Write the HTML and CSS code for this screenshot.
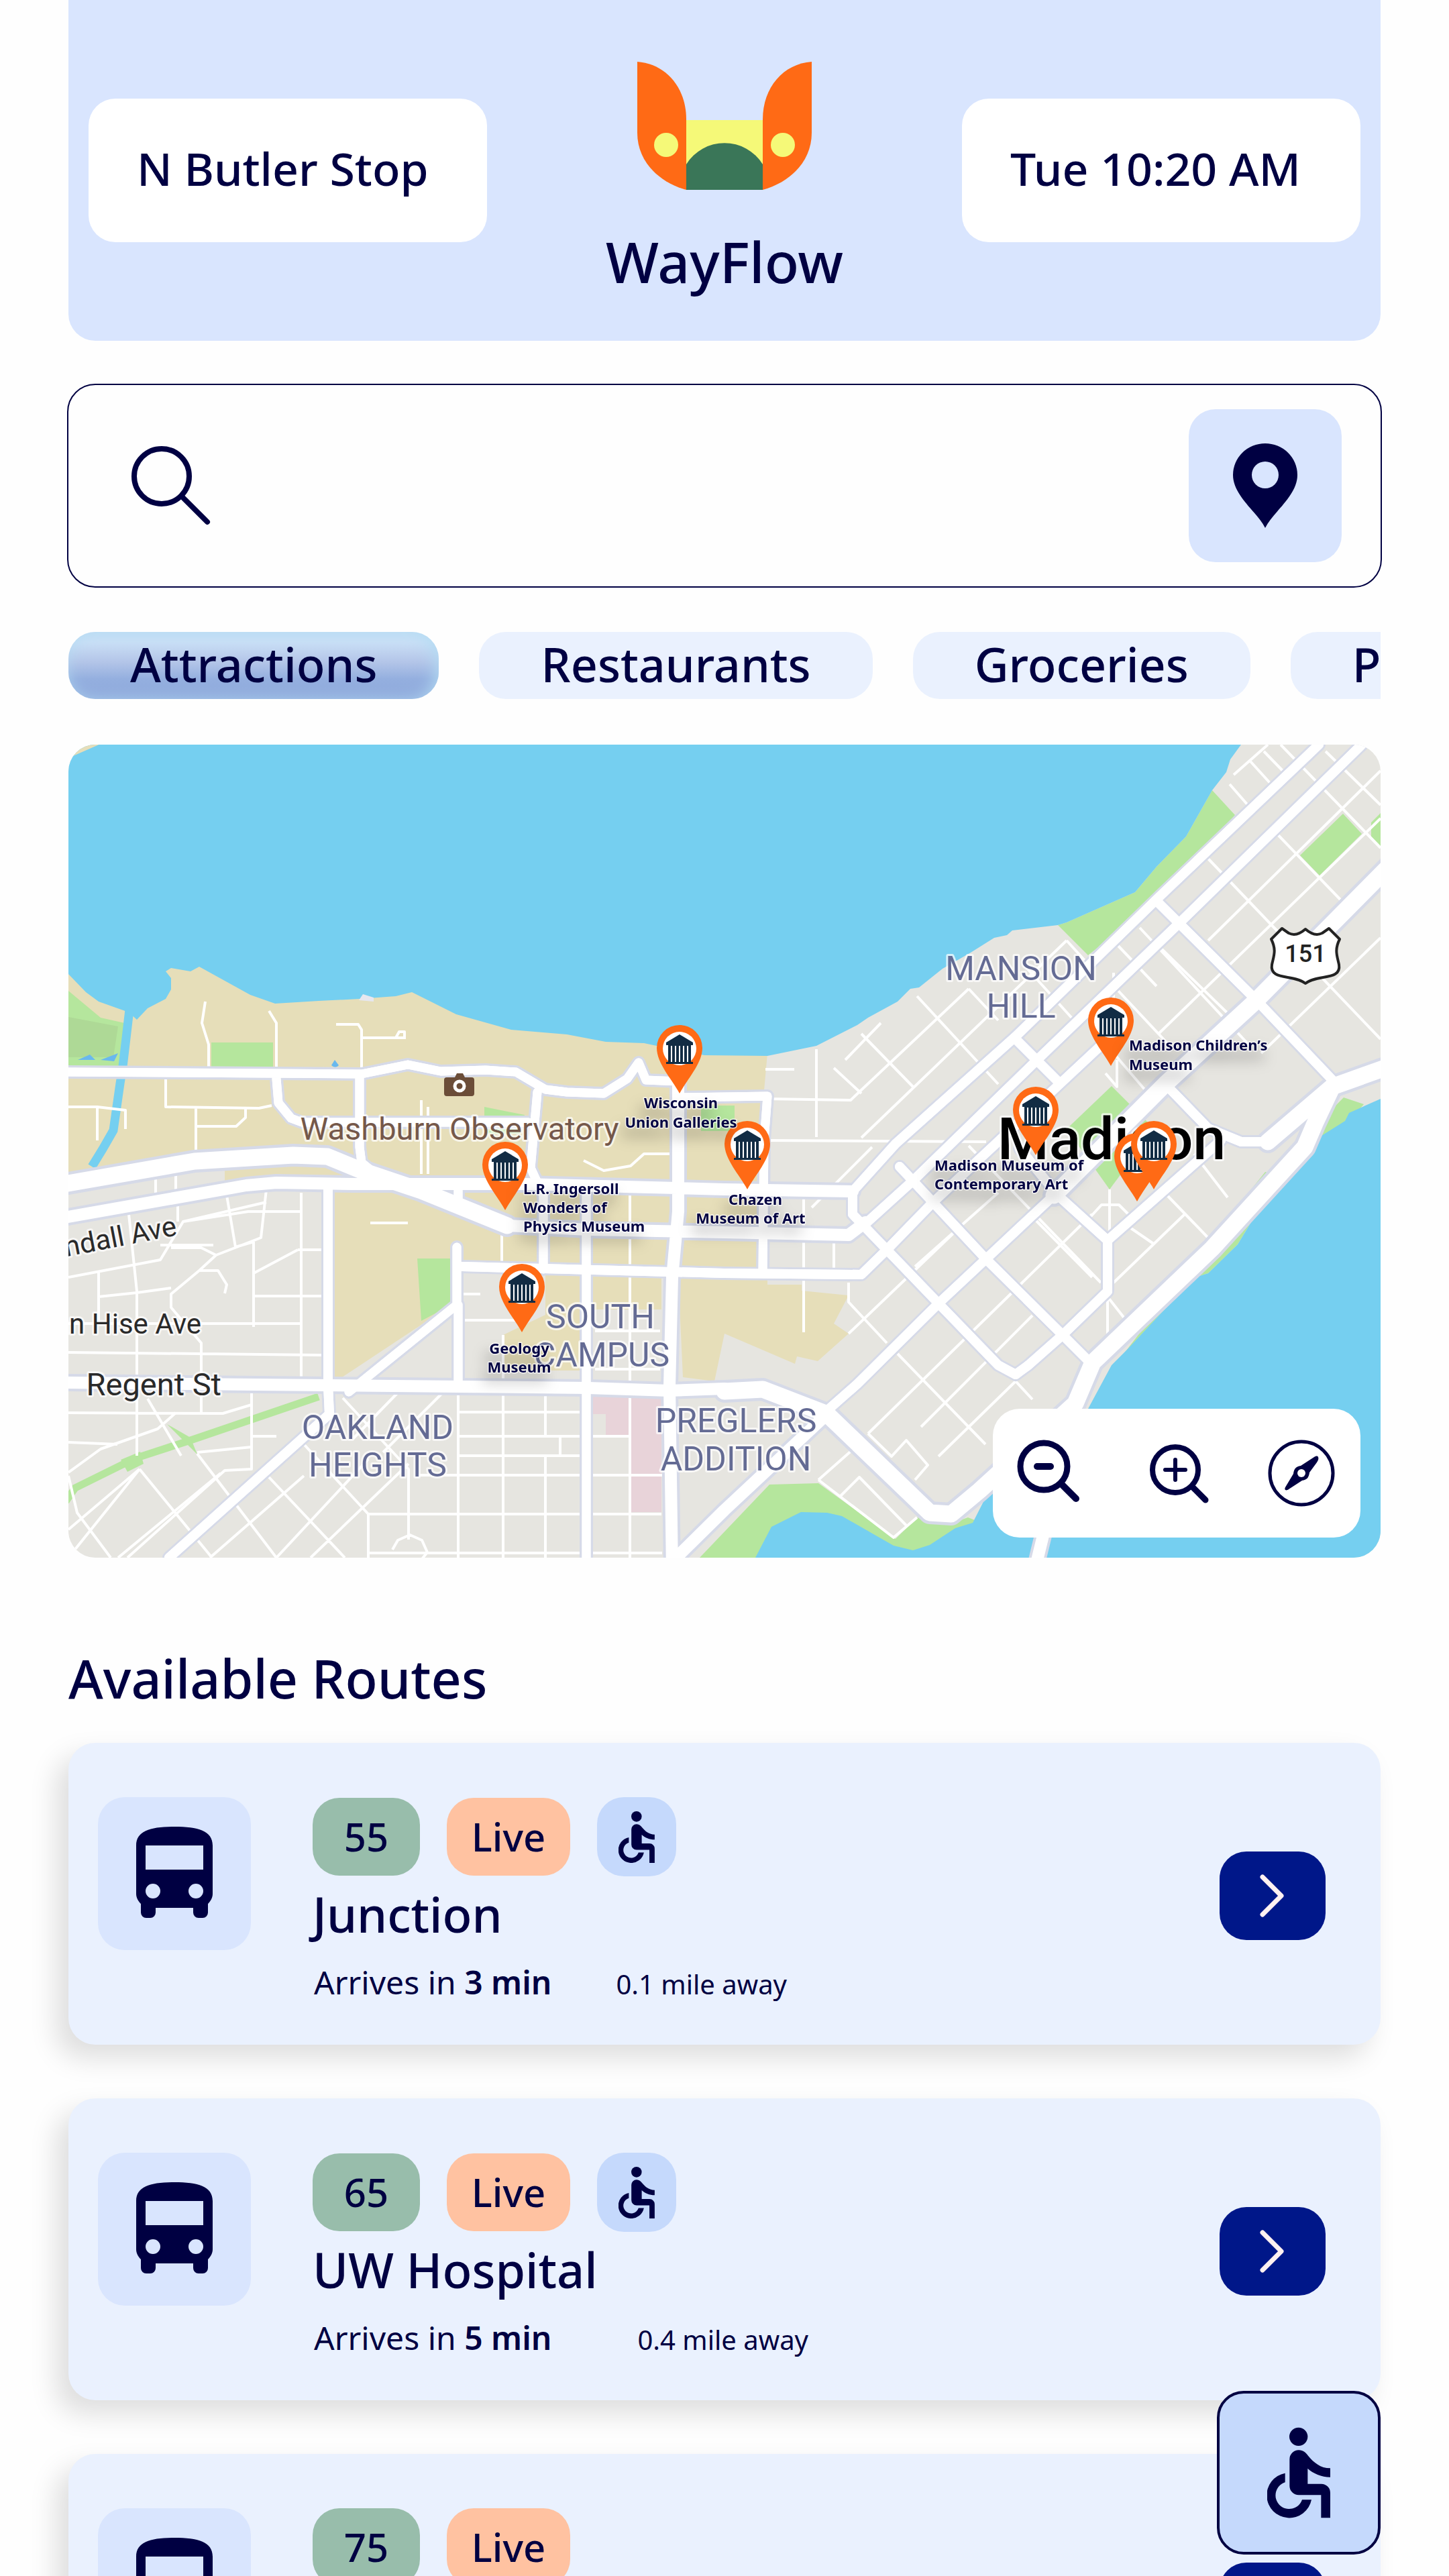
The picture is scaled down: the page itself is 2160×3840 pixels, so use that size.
FILE: index.html
```html
<!DOCTYPE html>
<html lang="en">
<head>
<meta charset="utf-8">
<meta name="viewport" content="width=device-width, initial-scale=1">
<title>WayFlow</title>
<link rel="stylesheet" href="styles.css">
</head>
<body>
<svg class="sprite" aria-hidden="true">
  <symbol id="icon-bus" viewBox="0 0 114 136">
    <path fill-rule="evenodd" d="M0 28C0 6 22 0 57 0s57 6 57 28v72c0 6-3 11-7 15v13a8 8 0 0 1-8 8h-6a8 8 0 0 1-8-8v-7H29v7a8 8 0 0 1-8 8h-6a8 8 0 0 1-8-8v-13c-4-4-7-9-7-15zM14 28v36h86V28zM25 85a11 11 0 1 0 0 22 11 11 0 0 0 0-22zM89 85a11 11 0 1 0 0 22 11 11 0 0 0 0-22z"/>
  </symbol>
  <symbol id="icon-access" viewBox="570 358 282 404">
    <circle cx="710" cy="399" r="41"/>
    <path d="M670 500a41 41 0 0 1 41-41c20 0 32 12 42 25 25 30 55 56 99 56v40c-40 0-77-17-101-39v69h61a40 40 0 0 1 40 40v112h-41V660H711a41 41 0 0 1-41-41z"/>
    <path d="M650 562a101 101 0 1 0 118 119h-42a61 61 0 1 1-76-78z"/>
  </symbol>
  <symbol id="icon-chevron" viewBox="0 0 38 64">
    <path d="M4 4l28 28L4 60" fill="none" stroke="currentColor" stroke-width="7" stroke-linecap="round" stroke-linejoin="round"/>
  </symbol>
  <symbol id="pin" viewBox="-34 -102 68 102" overflow="visible">
    <path fill="#ff6a15" d="M0 0C-12-22-34-45-34-68a34 34 0 0 1 68 0C34-45 12-22 0 0z"/>
    <circle cy="-67" r="25" fill="#fff"/>
    <path fill="#122c44" d="M0-88l20 12v4h-3v25h3v3h-40v-3h3v-25h-3v-4z"/>
    <path stroke="#fff" stroke-width="2" d="M-12-71v24M-6-71v24M0-71v24M6-71v24M12-71v24"/>
  </symbol>
</svg>

<div class="app">
  <header class="topbar">
    <div class="info-box">N Butler Stop</div>
    <div class="brand">
      <svg class="brand-logo" viewBox="0 0 260 192" aria-hidden="true">
        <path fill="#f5f978" d="M73 87h114v104H73z"/>
        <path fill="#3a7658" d="M73 191v-38a67 67 0 0 1 114 0v38z"/>
        <path fill="#ff6a15" d="M0 0c42 3 73 38 73 86v105C30 179 0 147 0 106z"/>
        <path fill="#ff6a15" d="M260 0c-42 3-73 38-73 86v105c43-12 73-44 73-85z"/>
        <circle cx="43" cy="124" r="18" fill="#f5f978"/>
        <circle cx="217" cy="124" r="18" fill="#f5f978"/>
      </svg>
      <h1 class="brand-name">WayFlow</h1>
    </div>
    <time class="info-box">Tue 10:20 AM</time>
  </header>

  <form class="search" role="search">
    <svg class="search-icon" viewBox="0 0 118 118" aria-hidden="true"><circle cx="45" cy="45" r="41"/><path d="M75 75l38 38"/></svg>
    <input class="search-input" type="search" aria-label="Search destinations">
    <button class="locate" type="button" aria-label="Use my location">
      <svg viewBox="0 0 96 126" aria-hidden="true"><path fill-rule="evenodd" d="M48 126C36 102 0 78 0 47a48 47 0 0 1 96 0c0 31-36 55-48 79zM48 27a20 20 0 1 0 0 40 20 20 0 0 0 0-40z"/></svg>
    </button>
  </form>

  <nav class="chips" aria-label="Categories">
    <button class="chip chip--active" type="button">Attractions</button>
    <button class="chip" type="button">Restaurants</button>
    <button class="chip" type="button">Groceries</button>
    <button class="chip" type="button">Parks</button>
  </nav>

  <section class="map" aria-label="Map of Madison">
    <svg class="map-canvas" viewBox="102 1110 1956 1212" preserveAspectRatio="xMidYMid slice">
      <rect x="102" y="1110" width="1956" height="1212" fill="#e6e5e0"/>

      <!-- campus -->
      <g fill="#e6deb9">
        <path d="M102 1440L300 1430 620 1470 762 1530 979 1550 1144 1570 1139 1626 1144 1782H1195V1924L1265 1931 1243 1973 1265 1988 1219 2029 1188 2022 1185 2033 1080 1988 1065 2059 1018 2053 1011 1902H813V1890H683L673 1945 498 2061V1776L335 1760V1742L290 1731 102 1749z"/>
        <path d="M750 1990L813 1960V1902H864V2043H750zM864 1902H986V1952H864z"/>
      </g>
      <path d="M1144 1640H1200V1915H1144z" fill="#e6e5e0"/>

      <!-- parks -->
      <g fill="#b5e69d">
        <path d="M102 1477l48 40 40 9-8 64h-80zM315 1554h92v38h-92zM622 1876h51v69l-45 24z"/>
        <path d="M1807 1178l34 37-69 77-48 51-102 81-45-45 13-4 102-45 32-38 44-45zM2002 1213l28 30-63 62-29-30zM2044 1226l14-14v50l-14-14z"/>
        <path d="M1657 1619l64 64-67 90-64-90z"/>
        <path d="M1043 2322l104-109 73-2 115 83 32-32 45 11 31-11 20 8-90 52z"/>
        <path d="M2003 1636l30 10-50 60-40-10zM1922 1755l-51 57-26 43-44 43-19 6-32 33-74 80 130-170 80-100z"/>
        <path d="M722 1650l60 12-8 28h-52zM1045 1648h50v38h-50z"/>
      </g>
      <path d="M102 1516l74 14-7 46h-67z" fill="#aed996"/>
      <path d="M475 2082l-191 65-83 27-89 44-14 20" fill="none" stroke="#b5e69d" stroke-width="11"/>
      <path d="M249 2123l45 45-10-25zM180 2176l10 18 24-12-5-18z" fill="#b5e69d"/>

      <path d="M884 2082h102v172h-45v-115h-38v-31h-19z" fill="#e8d3d9"/>

      <!-- lakes -->
      <g fill="#75cff0">
        <path d="M102 1110V1452L128 1479 147 1493 192 1509 204 1520 220 1503 247 1489 255 1475V1458L247 1448 255 1443 284 1448 297 1441 373 1483 410 1496 475 1492 536 1489 590 1485 614 1479 680 1512 762 1535 845 1542 903 1553 960 1555 979 1559 1050 1573 1144 1574 1217 1559 1278 1528 1294 1517 1338 1493 1357 1474 1370 1472 1405 1444 1447 1420 1482 1398 1501 1394 1509 1387 1577 1379 1590 1375 1692 1330 1724 1292 1768 1247 1807 1178 1828 1151 1834 1132 1850 1110z"/>
        <path d="M2058 1638L2011 1659 2005 1671 1970 1693 1960 1702 1927 1737 1922 1755 1871 1812 1845 1855 1801 1898 1782 1904 1750 1937 1680 2012 1657 2035 1622 2100 1542 2190 1480 2211 1450 2270 1424 2278 1386 2303 1361 2311 1332 2304 1255 2260 1233 2255 1194 2254 1150 2276 1126 2322H2058z"/>
      </g>
      <path d="M193 1505l-10 85-4 25-10 70-16 28-16 26" fill="none" stroke="#75cff0" stroke-width="13"/>
      <path d="M102 1130l50-22h-50z" fill="#e6deb9"/>
      <path d="M494 1588l5-8 6 8q-5 6-11 0zM116 1580l18-8 8 8zM150 1580l26-10-6 12z" fill="#69b8ee"/>
      <path d="M535 1491l6-9 16 5v6z" fill="#e6e7ef"/>

      <!-- side streets -->
      <g fill="none" stroke="#fff" stroke-width="4" stroke-linejoin="round">
        <path d="M102 1904L239 1878 273 1821 397 1792M239 1856H318M265 1796V1821M273 1821L370 1806H449M338 1782L351 1859M397 1773L389 1845 322 1871 297 1894 255 1929V1949L300 2002 300 2106M449 1778V2055M378 1851V1978M378 1851L351 1859M444 1863H479M322 1871L300 1860H255M378 1898L444 1863M204 1925V2170M192 1810L204 1925M102 1973H449M102 2016L479 2020M147 1896V1973M147 1933L204 1927 255 1920M297 1894H325L338 1915 335 1928M378 1932H479M102 2106L332 2107 375 2094M375 2055V2190L335 2192 190 2322"/>
        <path d="M102 2195L150 2160 235 2130 262 2106M102 2150L175 2153M220 2085L270 2170M208 2190L102 2280M208 2190L316 2322M294 2167L412 2322M294 2165L375 2157M329 2196L176 2322M399 2200L514 2322M453 2200L313 2322M549 2175L412 2322M453 2153L549 2257H986M549 2257V2322M609 2182L463 2322M102 2200L115 2255 165 2322M102 2322L208 2190"/>
        <path d="M511 2084L609 2190V2295M593 2076L526 2145M660 2076L571 2165M683 2080V2322M750 1990V2322M813 2080V2139M835 2141V2170M813 2172V2322M939 1778V2322M683 2105H864M683 2141H941M683 2170H864M620 2199H987M549 2315H987M585 2310l8-14 18-8 18 8 8 18-8 10M689 1968H770M887 1984H984M887 2041H984M412 2141H375M689 1929H716"/>
        <path d="M306 1493L301 1525 311 1557V1592M401 1507L412 1525V1590M501 1527H534L539 1535V1598M539 1547H605M590 1547l5-9h8v9M247 1608V1650L386 1652 405 1648M102 1650H145L187 1655V1683M145 1650V1700M292 1652V1742M292 1679H352L366 1666V1652M628 1640V1750M638 1650V1750M552 1823H608M748 1830V1880M870 1730L900 1745 940 1738 960 1720H1000M232 1757V1780M262 1750V1776"/>
        <path d="M1890 1110L1839 1155M2058 1149L1801 1402M2058 1220L1727 1541M2058 1398L1880 1570M1864 1135L1893 1167M1833 1169L1860 1200M1893 1232L1998 1341M1884 1120L1916 1153M1909 1110L2058 1264M1976 1120L2058 1200M1801 1280L2058 1549M1699 1383L1864 1560M1667 1410L1724 1470M1731 1414L1845 1525M1667 1477L1740 1555"/>
        <path d="M1590 1402L1284 1696M1590 1402l40 44M1217 1564V1695M1144 1638L1268 1640 1444 1474M1144 1700L1470 1702M1367 1485L1488 1616M1444 1474L1488 1521M1284 1541L1361 1620M1243 1592L1284 1630M1313 1525L1260 1580M1526 1438L1600 1520M1141 1594H1184M1660 1450V1510M1665 1580V1620L1648 1600"/>
        <path d="M1539 1814L1628 1904M1444 1708L1641 1912M1488 1778L1364 1888M1628 1810L1294 2137M1766 1810L1660 1912M1539 1961L1373 2127M1514 2059L1399 2171M1338 2018L1469 2153M1514 2059L1539 2086M1265 1912V1941L1322 2002M1265 1988L1430 1830M1243 1851V1892M1198 1782V1986M1654 1773V1835M1651 1933V1988M1651 1933L1680 1970M1686 1831L1721 1855M1294 2137L1329 2171 1351 2147 1383 2184 1364 2206M1220 2206L1332 2292 1367 2262M1271 2161L1220 2206M1252 2231L1281 2202 1351 2274M1210 1800L1300 1710M1740 1782L1820 1865M1780 1720L1830 1785M1720 1640l-60-70M1620 1820l22-24h26l20 20"/>
      </g>

      <!-- main roads, casing under fill -->
      <g fill="none" stroke="#d6dae8" stroke-linejoin="round" stroke-linecap="round">
        <g stroke-width="20">
          <path id="roads-a" d="M90 1598L539 1601 608 1587 657 1597 724 1595 769 1598 813 1624 845 1628 900 1630 935 1608 952 1584 963 1610 1011 1612M412 1608L415 1644 434 1667 450 1673H788M536 1604V1710L539 1733 560 1750M801 1628L791 1741 810 1782V1892M683 1945V2065M681 1859V1945L520 2075M1011 1636L1144 1634 1139 1700 1137 1895M874 1778V2340M683 1775V1800"/>
          <path id="roads-b" d="M1966 1110L1730 1335 1514 1545 1335 1705 1271 1776M2030 1110L1759 1375 1546 1580 1361 1760 1287 1827M1661 1540L1389 1794 1322 1863 1284 1900 1080 1898 689 1888M1724 1343L1871 1489 1992 1616M1514 1549L1577 1612M1520 1712L1577 1782 1651 1849M1341 1739L1469 1876 1584 1990 1629 2035M1737 1616L1801 1682 1850 1702H1890M1571 1782L1399 1943 1278 2063 1236 2100M1820 1700L1651 1849V1925L1584 1990 1533 2035 1514 2049 1488 2035 1399 1943 1322 1863 1271 1810V1776M489 1773V2065L491 2108 252 2322"/>
        </g>
        <g stroke-width="26">
          <path id="roads-c" d="M90 1816L367 1767 412 1763 526 1765 782 1765 1080 1773 1271 1776M1011 1612V1806L1002 1904 998 2067 1002 2340M756 1827L877 1833 1080 1837 1265 1841 1290 1822M90 2061L488 2065 877 2069 998 2073 1080 2070M1233 2108L1080 2251 1008 2322M1603 2092L1545 2330"/>
        </g>
        <g stroke-width="34">
          <path id="roads-d" d="M90 1766L290 1731 437 1722 488 1724 539 1745 628 1775 756 1827M2070 1292L1871 1493 1737 1616 1571 1782M2070 1590L1986 1620 1960 1675 1945 1710 1807 1861 1629 2031 1603 2092 1460 2222 1418 2257 1386 2255 1233 2108 1137 2071 1080 2074M1986 1620L1890 1702"/>
        </g>
      </g>
      <g fill="none" stroke="#fff" stroke-linejoin="round" stroke-linecap="round">
        <use href="#roads-a" stroke-width="13"/>
        <use href="#roads-b" stroke-width="14"/>
        <use href="#roads-c" stroke-width="18"/>
        <use href="#roads-d" stroke-width="25"/>
        <path stroke-width="13" d="M90 1598L539 1601 608 1587 657 1597 724 1595 769 1598 813 1624 845 1628 900 1630 935 1608 952 1584 963 1610 1011 1612M412 1608L415 1644 434 1667 450 1673H788M536 1604V1710L539 1733 560 1750M801 1628L791 1741 810 1782V1892M683 1945V2065M681 1859V1945L520 2075M1011 1636L1144 1634 1139 1700 1137 1895M874 1778V2340M683 1775V1800"/>
        <path stroke-width="14" d="M1966 1110L1730 1335 1514 1545 1335 1705 1271 1776M2030 1110L1759 1375 1546 1580 1361 1760 1287 1827M1661 1540L1389 1794 1322 1863 1284 1900 1080 1898 689 1888M1724 1343L1871 1489 1992 1616M1514 1549L1577 1612M1520 1712L1577 1782 1651 1849M1341 1739L1469 1876 1584 1990 1629 2035M1737 1616L1801 1682 1850 1702H1890M1571 1782L1399 1943 1278 2063 1236 2100M1820 1700L1651 1849V1925L1584 1990 1533 2035 1514 2049 1488 2035 1399 1943 1322 1863 1271 1810V1776M489 1773V2065L491 2108 252 2322"/>
      </g>

      <!-- route shield -->
      <path d="M1911 1384l10 7c8 4 17 1 25-6 8 7 17 10 25 6l10-7 16 16c-8 16-4 24-1 38 4 24-32 14-50 28-18-14-54-4-50-28 3-14 7-22-1-38z" fill="#fff" stroke="#222" stroke-width="4" stroke-linejoin="round"/>
      <text class="map-route" x="1946" y="1434">151</text>

      <!-- viewpoint -->
      <path d="M666 1606h12l3-6h9l3 6h10q4 0 4 4v20q0 4-4 4h-37q-4 0-4-4v-20q0-4 4-4z" fill="#6b4d38"/>
      <circle cx="685" cy="1619" r="7" fill="#6b4d38" stroke="#fff" stroke-width="5"/>

      <g class="map-area">
        <text x="1522" y="1461">MANSION</text><text x="1522" y="1517">HILL</text>
        <text x="895" y="1980">SOUTH</text><text x="897" y="2037">CAMPUS</text>
        <text x="563" y="2145">OAKLAND</text><text x="563" y="2201">HEIGHTS</text>
        <text x="1097" y="2135">PREGLERS</text><text x="1097" y="2192">ADDITION</text>
      </g>
      <text class="map-place" x="685" y="1699">Washburn Observatory</text>
      <g class="map-street">
        <text x="265" y="1841" transform="rotate(-11 265 1841)">Kendall Ave</text>
        <text x="300" y="1988">Van Hise Ave</text>
        <text class="map-street--main" x="330" y="2080">Regent St</text>
      </g>
      <text class="map-city" x="1657" y="1728">Madison</text>

      <g>
        <use href="#pin" x="979" y="1528" width="68" height="102"/>
        <use href="#pin" x="719" y="1702" width="68" height="102"/>
        <use href="#pin" x="744" y="1884" width="68" height="102"/>
        <use href="#pin" x="1080" y="1671" width="68" height="102"/>
        <use href="#pin" x="1510" y="1620" width="68" height="102"/>
        <use href="#pin" x="1622" y="1487" width="68" height="102"/>
        <use href="#pin" x="1661" y="1689" width="68" height="102"/>
        <use href="#pin" x="1686" y="1671" width="68" height="102"/>
      </g>
      <g class="pin-label pin-label--center">
        <text x="1015" y="1652">Wisconsin</text><text x="1015" y="1681">Union Galleries</text>
        <text x="1126" y="1796">Chazen</text><text x="1119" y="1824">Museum of Art</text>
        <text x="774" y="2018">Geology</text><text x="774" y="2046">Museum</text>
      </g>
      <g class="pin-label">
        <text x="780" y="1780">L.R. Ingersoll</text><text x="780" y="1808">Wonders of</text><text x="780" y="1836">Physics Museum</text>
        <text x="1393" y="1745">Madison Museum of</text><text x="1393" y="1773">Contemporary Art</text>
        <text x="1683" y="1566">Madison Children’s</text><text x="1683" y="1595">Museum</text>
      </g>
    </svg>
    <div class="map-controls">
      <button type="button" aria-label="Zoom out">
        <svg viewBox="0 0 100 100" aria-hidden="true"><circle cx="42" cy="40" r="35" stroke-width="9"/><path d="M68 66l22 22" stroke-width="10"/><path d="M32 40h20" stroke-width="10"/></svg>
      </button>
      <button type="button" aria-label="Zoom in">
        <svg viewBox="-8 0 100 100" aria-hidden="true"><circle cx="42" cy="45" r="34" stroke-width="8"/><path d="M67 70l20 20" stroke-width="9"/><path d="M27 45h30M42 30v30" stroke-width="6"/></svg>
      </button>
      <button type="button" aria-label="Reset orientation">
        <svg viewBox="0 0 100 100" aria-hidden="true"><circle cx="50" cy="50" r="47" stroke-width="5"/><path class="needle" d="M75 26c1 2 0 5-2 8L62 49c-1 8-4 11-11 12L31 74c-4 3-7 1-5-3l12-20c1-8 4-11 11-12l20-13c3-2 5-2 6 0z"/><circle class="hub" cx="50" cy="50" r="6"/></svg>
      </button>
    </div>
  </section>

  <main>
    <h2 class="section-title">Available Routes</h2>
    <ul class="routes">
      <li class="route">
        <div class="route-icon"><svg aria-hidden="true"><use href="#icon-bus"/></svg></div>
        <div class="route-info">
          <div class="badges">
            <span class="badge badge--line">55</span><span class="badge badge--live">Live</span>
            <span class="badge badge--access"><svg role="img" aria-label="Wheelchair accessible"><use href="#icon-access"/></svg></span>
          </div>
          <h3 class="route-name">Junction</h3>
          <p class="route-meta"><span>Arrives in <b>3 min</b></span><small>0.1 mile away</small></p>
        </div>
        <button class="route-go" type="button" aria-label="Open route 55"><svg aria-hidden="true"><use href="#icon-chevron"/></svg></button>
      </li>
      <li class="route">
        <div class="route-icon"><svg aria-hidden="true"><use href="#icon-bus"/></svg></div>
        <div class="route-info">
          <div class="badges">
            <span class="badge badge--line">65</span><span class="badge badge--live">Live</span>
            <span class="badge badge--access"><svg role="img" aria-label="Wheelchair accessible"><use href="#icon-access"/></svg></span>
          </div>
          <h3 class="route-name">UW Hospital</h3>
          <p class="route-meta route-meta--wide"><span>Arrives in <b>5 min</b></span><small>0.4 mile away</small></p>
        </div>
        <button class="route-go" type="button" aria-label="Open route 65"><svg aria-hidden="true"><use href="#icon-chevron"/></svg></button>
      </li>
      <li class="route">
        <div class="route-icon"><svg aria-hidden="true"><use href="#icon-bus"/></svg></div>
        <div class="route-info">
          <div class="badges">
            <span class="badge badge--line">75</span><span class="badge badge--live">Live</span>
          </div>
        </div>
        <button class="route-go" type="button" aria-label="Open route 75"><svg aria-hidden="true"><use href="#icon-chevron"/></svg></button>
      </li>
    </ul>
  </main>
</div>

<button class="access-toggle" type="button" aria-label="Accessibility options"><svg aria-hidden="true"><use href="#icon-access"/></svg></button>
</body>
</html>
```
FILE: styles.css
```css
:root {
  --ink: #000042;
  --blue-100: #eaf1fe;
  --blue-200: #d9e5fe;
  --blue-300: #c5d9fc;
  --navy: #001789;
  --radius: 40px;
  --edge: 102px;
}

* { box-sizing: border-box; }

body {
  margin: 0;
  background: #fefefe;
  color: var(--ink);
  font-family: "Noto Sans", sans-serif;
  font-weight: 500;
}

button {
  margin: 0;
  padding: 0;
  border: 0;
  background: none;
  color: inherit;
  font: inherit;
  cursor: pointer;
}

h1, h2, h3, p, ul { margin: 0; padding: 0; font-weight: 500; }

.sprite { position: absolute; width: 0; height: 0; }

.app {
  height: 100vh;
  overflow: hidden;
  padding: 0 var(--edge);
}

/* top bar */
.topbar {
  display: grid;
  grid-template-columns: minmax(0, 594px) 1fr minmax(0, 594px);
  align-items: center;
  padding: 0 30px;
  border-radius: 0 0 var(--radius) var(--radius);
  background: var(--blue-200);
}

.info-box {
  padding: 56px 72px 62px;
  border-radius: var(--radius);
  background: #fff;
  font-size: 68px;
  line-height: 96px;
  white-space: nowrap;
}

.brand {
  display: flex;
  flex-direction: column;
  align-items: center;
  gap: 56px;
  padding: 92px 0 68px;
}

.brand-logo { width: 260px; height: 192px; }

.brand-name { font-size: 84px; line-height: 100px; }

/* search */
.search {
  display: flex;
  align-items: center;
  gap: 60px;
  margin: 64px -2px 0;
  padding: 36px 58px 36px 94px;
  border: 2px solid var(--ink);
  border-radius: 42px;
}

.search-icon {
  width: 118px;
  height: 118px;
  fill: none;
  stroke: var(--ink);
  stroke-width: 8;
  stroke-linecap: round;
}

.search-input {
  flex: 1;
  min-width: 0;
  border: 0;
  outline: 0;
  background: none;
  color: var(--ink);
  font: inherit;
  font-size: 68px;
}

.locate {
  display: grid;
  place-items: center;
  width: 228px;
  height: 228px;
  border-radius: var(--radius);
  background: var(--blue-200);
}

.locate svg { width: 96px; height: 126px; fill: var(--ink); }

/* category chips */
.chips {
  display: flex;
  gap: 60px;
  margin-top: 66px;
  overflow: hidden;
}

.chip {
  flex: none;
  padding: 0 92px 4px;
  border-radius: var(--radius);
  background: var(--blue-100);
  font-size: 70px;
  line-height: 96px;
}

.chip--active {
  background: linear-gradient(#cbdff6 15%, #b3c5e8 45%, #94afdf 70%, #8ea8db);
  box-shadow: inset -4px 4px 24px #b4dcf3;
}

/* map */
.map {
  position: relative;
  margin-top: 68px;
  border-radius: var(--radius);
  overflow: hidden;
}

.map-canvas { display: block; width: 100%; font-family: Roboto, sans-serif; font-size: 48px; }

.map-canvas text {
  paint-order: stroke;
  stroke: #fff;
  stroke-width: 6px;
  stroke-opacity: .7;
  stroke-linejoin: round;
}

.map-area { fill: #646b94; font-size: 50px; font-weight: 400; text-anchor: middle; }
.map-place { fill: #75584a; font-size: 47px; font-weight: 400; text-anchor: middle; }
.map-street { fill: #2a2a2a; font-size: 42px; font-weight: 400; text-anchor: end; }
.map-street--main { font-size: 47px; }
.map-route { fill: #222; font-size: 36px; font-weight: 500; text-anchor: middle; }
.map-city { fill: #000; font-size: 88px; font-weight: 500; text-anchor: middle; }

.pin-label {
  fill: var(--ink);
  font-family: "Noto Sans", sans-serif;
  font-size: 22px;
  font-weight: 700;
  filter: drop-shadow(-6px 14px 10px rgba(0, 0, 0, .25));
}

.map-canvas .pin-label text { stroke-width: 3px; }

.pin-label--center { text-anchor: middle; }

.map-controls {
  position: absolute;
  right: 30px;
  bottom: 30px;
  display: flex;
  justify-content: space-between;
  align-items: center;
  width: 548px;
  height: 192px;
  padding: 0 38px 0 34px;
  border-radius: var(--radius);
  background: #fff;
}

.map-controls svg {
  display: block;
  width: 100px;
  height: 100px;
  fill: none;
  stroke: var(--ink);
  stroke-linecap: round;
}

.map-controls .needle { fill: var(--ink); stroke: none; }
.map-controls .hub { fill: #fff; stroke: none; }

/* routes */
.section-title {
  margin: 140px 0 56px;
  font-size: 79px;
  line-height: 80px;
}

.routes {
  display: grid;
  gap: 80px;
  list-style: none;
}

.route {
  display: flex;
  align-items: flex-start;
  min-height: 450px;
  padding: 81px 82px 56px 44px;
  border-radius: var(--radius);
  background: var(--blue-100);
  box-shadow: -18px 20px 40px rgba(0, 0, 0, .13);
}

.route-icon {
  display: grid;
  place-items: center;
  width: 228px;
  height: 228px;
  padding-bottom: 4px;
  border-radius: var(--radius);
  background: var(--blue-200);
}

.route-icon svg { width: 114px; height: 136px; fill: var(--ink); }

.route-info { flex: 1; min-width: 0; margin-left: 92px; }

.badges { display: flex; align-items: center; gap: 40px; }

.badge {
  display: grid;
  place-items: center;
  height: 116px;
  border-radius: var(--radius);
  font-size: 58px;
  line-height: 80px;
}

.badge--line { width: 160px; background: #98bdab; }
.badge--live { width: 184px; background: #ffc2a1; }
.badge--access { width: 118px; height: 118px; background: var(--blue-300); }
.badge--access svg { width: 54px; height: 77px; fill: var(--ink); }

.route-name { margin-top: 16px; font-size: 72px; line-height: 80px; }

.route-meta {
  display: flex;
  align-items: baseline;
  gap: 96px;
  margin-top: 32px;
  padding-left: 2px;
  font-size: 48px;
  font-weight: 400;
  line-height: 60px;
}

.route-meta--wide { gap: 128px; }
.route-meta b { font-weight: 600; }
.route-meta small { font-size: 40px; }

.route-go {
  display: grid;
  place-items: center;
  align-self: center;
  width: 158px;
  height: 132px;
  margin-bottom: 20px;
  border-radius: var(--radius);
  background: var(--navy);
  color: #fff1f1;
}

.route-go svg { width: 38px; height: 64px; }

/* floating accessibility button */
.access-toggle {
  position: fixed;
  right: var(--edge);
  bottom: 32px;
  display: grid;
  place-items: center;
  width: 244px;
  height: 244px;
  border: 4px solid var(--ink);
  border-radius: var(--radius);
  background: var(--blue-300);
}

.access-toggle svg { width: 94px; height: 136px; fill: var(--ink); }
```
